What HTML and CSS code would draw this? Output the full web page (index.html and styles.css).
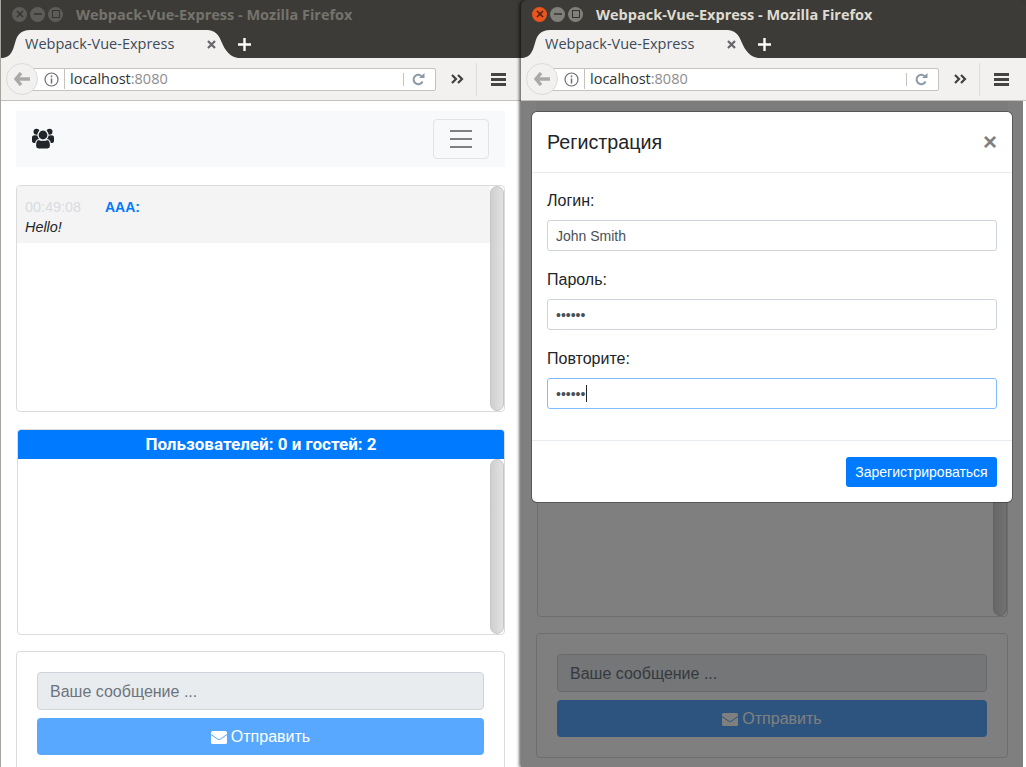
FILE: index.html
```html
<!DOCTYPE html>
<html lang="en">
<head>
    <meta charset="UTF-8">
    <meta name="viewport" content="width=device-width, initial-scale=1.0">
    <title>Webpack-Vue-Express</title>
    <link rel="stylesheet" href="styles.css">
</head>
<body>
    <div class="desktop">
        <!-- left window: unfocused -->
        <div class="window window-left">
            <div class="titlebar">
                <div class="win-buttons">
                    <span class="win-btn"><svg width="10" height="10" viewBox="0 0 10 10"><path d="M2 2l6 6M8 2l-6 6" stroke="#35342f" stroke-width="1.5"/></svg></span>
                    <span class="win-btn"><svg width="10" height="10" viewBox="0 0 10 10"><path d="M1 5h8" stroke="#35342f" stroke-width="1.5"/></svg></span>
                    <span class="win-btn"><svg width="10" height="10" viewBox="0 0 10 10"><rect x="1.5" y="1.5" width="7" height="7" fill="none" stroke="#35342f"/></svg></span>
                </div>
                <div class="win-title">Webpack-Vue-Express - Mozilla Firefox</div>
            </div>
            <div class="tabstrip">
                <div class="tab">
                    <svg class="tab-shape" width="235" height="28" viewBox="0 0 235 28"><path d="M0 28C8 27 10 20 12 13C14 5 18 0 27 0H204C212 0 216 5 219 13C222 20 227 27 235 28Z" fill="#f2f1f0"/></svg>
                    <span class="tab-label">Webpack-Vue-Express</span>
                    <svg class="tab-close" width="9" height="9" viewBox="0 0 9 9"><path d="M1 1l7 7M8 1l-7 7" stroke="#67666a" stroke-width="2.2"/></svg>
                </div>
                <svg class="tab-new" width="13" height="13" viewBox="0 0 13 13"><path d="M6.5 0v13M0 6.5h13" stroke="#fff" stroke-width="2.4"/></svg>
            </div>
            <div class="toolbar">
                <div class="back-btn"><svg width="16" height="14" viewBox="0 0 16 14"><path d="M7 1L2 7l5 6M2.5 7H16" fill="none" stroke="#a9a9a7" stroke-width="3.4"/></svg></div>
                <div class="urlbar">
                    <svg class="info-icon" width="15" height="15" viewBox="0 0 15 15"><circle cx="7.5" cy="7.5" r="6.5" fill="none" stroke="#6f6f6f" stroke-width="1.2"/><path d="M7.5 6.5v5M7.5 3.5v1.8" stroke="#6f6f6f" stroke-width="1.5"/></svg>
                    <span class="url"><span class="url-host">localhost</span>:8080</span>
                    <svg class="reload-icon" width="13" height="13" viewBox="0 0 13 13"><path d="M10.5 8.5A4.7 4.7 0 1 1 9.5 3" fill="none" stroke="#8c9aa6" stroke-width="2"/><path d="M7 5h5.5V0z" fill="#8c9aa6"/></svg>
                </div>
                <svg class="more-icon" width="13" height="10" viewBox="0 0 13 10"><path d="M1 1l4 4-4 4M7 1l4 4-4 4" fill="none" stroke="#404040" stroke-width="2.2"/></svg>
                <div class="menu-btn"><span></span><span></span><span></span></div>
            </div>
            <div class="viewport">
                <div class="page">
                    <nav class="navbar">
                        <svg width="22" height="22" viewBox="0 0 22 22">
                            <circle cx="4.5" cy="3.8" r="3"/>
                            <circle cx="17.5" cy="3.8" r="3"/>
                            <path d="M0 9.5C0 7.5 2 7 4 7.5H18C20 7 22 7.5 22 9.5V13C22 15 20 15 19 15H3C2 15 0 15 0 13Z"/>
                            <path d="M3.5 18C3.5 13 5.5 11.5 7 11.5C8.5 12.5 13.5 12.5 15 11.5C16.5 11.5 18.5 13 18.5 18C18.5 20 17 21 15.5 21H6.5C5 21 3.5 20 3.5 18Z" stroke="#f8f9fa" stroke-width="1.2"/>
                            <circle cx="11" cy="7" r="5" stroke="#f8f9fa" stroke-width="1.2"/>
                        </svg>
                        <div class="toggler">
                            <svg width="30" height="30" viewBox="0 0 30 30"><path d="M4 7h22M4 15h22M4 23h22" stroke="#808080" stroke-width="2"/></svg>
                        </div>
                    </nav>
                    <div class="box chat-box">
                        <div class="messages">
                            <div class="message">
                                <div class="message-head"><span class="message-time">00:49:08</span><span class="message-author">AAA:</span></div>
                                <div class="message-text">Hello!</div>
                            </div>
                        </div>
                        <div class="scrollbar"></div>
                    </div>
                    <div class="box users-box">
                        <div class="users-head">Пользователей: 0 и гостей: 2</div>
                        <div class="users-body"><div class="scrollbar"></div></div>
                    </div>
                    <div class="box send-box">
                        <input class="send-input" type="text" placeholder="Ваше сообщение ..." disabled>
                        <button class="send-btn" type="button">
                            <svg width="16" height="13" viewBox="0 0 16 13"><rect width="16" height="13" rx="1.5" fill="#fff"/><path d="M0 3.5L6.5 8Q8 9 9.5 8L16 3.5" fill="none" stroke="#58a8ff"/></svg>
                            Отправить
                        </button>
                    </div>
                </div>
            </div>
        </div>

        <!-- right window: focused, modal open -->
        <div class="window window-right">
            <div class="titlebar">
                <div class="win-buttons">
                    <span class="win-btn win-btn-close"><svg width="10" height="10" viewBox="0 0 10 10"><path d="M2 2l6 6M8 2l-6 6" stroke="#4a2010" stroke-width="1.5"/></svg></span>
                    <span class="win-btn"><svg width="10" height="10" viewBox="0 0 10 10"><path d="M1 5h8" stroke="#35342f" stroke-width="1.5"/></svg></span>
                    <span class="win-btn"><svg width="10" height="10" viewBox="0 0 10 10"><rect x="1.5" y="1.5" width="7" height="7" fill="none" stroke="#35342f"/></svg></span>
                </div>
                <div class="win-title">Webpack-Vue-Express - Mozilla Firefox</div>
            </div>
            <div class="tabstrip">
                <div class="tab">
                    <svg class="tab-shape" width="235" height="28" viewBox="0 0 235 28"><path d="M0 28C8 27 10 20 12 13C14 5 18 0 27 0H204C212 0 216 5 219 13C222 20 227 27 235 28Z" fill="#f2f1f0"/></svg>
                    <span class="tab-label">Webpack-Vue-Express</span>
                    <svg class="tab-close" width="9" height="9" viewBox="0 0 9 9"><path d="M1 1l7 7M8 1l-7 7" stroke="#67666a" stroke-width="2.2"/></svg>
                </div>
                <svg class="tab-new" width="13" height="13" viewBox="0 0 13 13"><path d="M6.5 0v13M0 6.5h13" stroke="#fff" stroke-width="2.4"/></svg>
            </div>
            <div class="toolbar">
                <div class="back-btn"><svg width="16" height="14" viewBox="0 0 16 14"><path d="M7 1L2 7l5 6M2.5 7H16" fill="none" stroke="#a9a9a7" stroke-width="3.4"/></svg></div>
                <div class="urlbar">
                    <svg class="info-icon" width="15" height="15" viewBox="0 0 15 15"><circle cx="7.5" cy="7.5" r="6.5" fill="none" stroke="#6f6f6f" stroke-width="1.2"/><path d="M7.5 6.5v5M7.5 3.5v1.8" stroke="#6f6f6f" stroke-width="1.5"/></svg>
                    <span class="url"><span class="url-host">localhost</span>:8080</span>
                    <svg class="reload-icon" width="13" height="13" viewBox="0 0 13 13"><path d="M10.5 8.5A4.7 4.7 0 1 1 9.5 3" fill="none" stroke="#8c9aa6" stroke-width="2"/><path d="M7 5h5.5V0z" fill="#8c9aa6"/></svg>
                </div>
                <svg class="more-icon" width="13" height="10" viewBox="0 0 13 10"><path d="M1 1l4 4-4 4M7 1l4 4-4 4" fill="none" stroke="#404040" stroke-width="2.2"/></svg>
                <div class="menu-btn"><span></span><span></span><span></span></div>
            </div>
            <div class="viewport">
                <div class="page">
                    <nav class="navbar"></nav>
                    <div class="box chat-box"><div class="messages"></div><div class="scrollbar"></div></div>
                    <div class="box users-box">
                        <div class="users-head">Пользователей: 0 и гостей: 2</div>
                        <div class="users-body"><div class="scrollbar"></div></div>
                    </div>
                    <div class="box send-box">
                        <input class="send-input" type="text" placeholder="Ваше сообщение ..." disabled>
                        <button class="send-btn" type="button">
                            <svg width="16" height="13" viewBox="0 0 16 13"><rect width="16" height="13" rx="1.5" fill="#fff"/><path d="M0 3.5L6.5 8Q8 9 9.5 8L16 3.5" fill="none" stroke="#58a8ff"/></svg>
                            Отправить
                        </button>
                    </div>
                </div>
                <div class="backdrop"></div>
                <div class="modal">
                    <div class="modal-header">
                        <div class="modal-title">Регистрация</div>
                        <div class="modal-close">×</div>
                    </div>
                    <div class="modal-body">
                        <label class="field-label">Логин:</label>
                        <input class="field" type="text" value="John Smith">
                        <label class="field-label">Пароль:</label>
                        <input class="field" type="password" value="123456">
                        <label class="field-label">Повторите:</label>
                        <div class="field-wrap">
                            <input class="field field-focus" type="password" value="123456">
                            <span class="caret"></span>
                        </div>
                    </div>
                    <div class="modal-footer">
                        <button class="register-btn" type="button">Зарегистрироваться</button>
                    </div>
                </div>
            </div>
        </div>
    </div>
</body>
</html>
```

FILE: styles.css
```css
* {
    box-sizing: border-box;
}

body {
    margin: 0;
    overflow: hidden;
    font-family: "Liberation Sans", Arial, sans-serif;
    background: #3c3b37;
}

.desktop {
    position: relative;
    width: 1026px;
    height: 767px;
    overflow: hidden;
}

/* windows sit on a free desktop */
.window {
    position: absolute;
    top: 0;
    height: 767px;
    display: flex;
    flex-direction: column;
    background: #3c3b37;
}

.window-left {
    left: 0;
    width: 521px;
    border-left: 1px solid #a5a49f;
}

.window-right {
    left: 521px;
    width: 505px;
    border-radius: 6px 6px 0 0;
    box-shadow: -2px 0 3px rgba(0, 0, 0, 0.55);
    z-index: 1;
    overflow: hidden;
}

/* title bar */
.titlebar {
    display: flex;
    align-items: center;
    height: 28px;
    flex-shrink: 0;
    padding-left: 11px;
}

.win-buttons {
    display: flex;
    gap: 3px;
}

.win-btn {
    display: flex;
    align-items: center;
    justify-content: center;
    width: 15px;
    height: 15px;
    border-radius: 50%;
    background: #5d5c58;
}

.window-right .win-btn {
    background: #807f7a;
}

.window-right .win-btn-close {
    background: #e9541f;
}

.win-title {
    margin-left: 13px;
    font-family: "Open Sans", sans-serif;
    font-size: 14.5px;
    font-weight: 700;
    color: #75736d;
}

.window-right .win-title {
    color: #dfdbd2;
}

/* tabs */
.tabstrip {
    display: flex;
    align-items: center;
    height: 30px;
    flex-shrink: 0;
    padding: 2px 0 0 2px;
}

.tab {
    position: relative;
    display: flex;
    align-items: center;
    justify-content: space-between;
    width: 235px;
    height: 28px;
    padding: 0 22px;
}

.tab-shape {
    position: absolute;
    top: 0;
    left: 0;
}

.tab-label {
    position: relative;
    font-family: "Open Sans", sans-serif;
    font-size: 14.5px;
    line-height: 26px;
    color: #3d4a57;
}

.tab-close {
    position: relative;
}

/* toolbar */
.toolbar {
    display: flex;
    align-items: center;
    height: 43px;
    flex-shrink: 0;
    padding: 0 15px 0 5px;
    background: #f2f1f0;
    border-bottom: 1px solid #c2c1be;
}

.window-right .toolbar {
    padding-right: 17px;
}

.back-btn {
    position: relative;
    z-index: 1;
    display: flex;
    align-items: center;
    justify-content: center;
    width: 32px;
    height: 32px;
    margin-right: -8px;
    flex-shrink: 0;
    border: 1px solid #dcdbd9;
    border-radius: 50%;
    background: #f2f1f0;
}

.urlbar {
    display: flex;
    align-items: center;
    flex: 1;
    height: 23px;
    padding-left: 13px;
    background: #fff;
    border: 1px solid #c4c3c0;
    border-radius: 2px;
}

.info-icon {
    flex-shrink: 0;
}

.url {
    flex: 1;
    margin-left: 5px;
    padding-left: 5px;
    border-left: 1px solid #c4c3c0;
    font-family: "Open Sans", sans-serif;
    font-size: 14.5px;
    line-height: 20px;
    color: #8e8e8e;
}

.url-host {
    color: #2e3436;
}

.reload-icon {
    box-sizing: content-box;
    padding: 0 10px 0 8px;
    border-left: 1px solid #c4c3c0;
}

.more-icon {
    margin: 0 12px 0 15px;
    flex-shrink: 0;
}

.menu-btn {
    display: flex;
    flex-direction: column;
    justify-content: center;
    gap: 2px;
    width: 30px;
    height: 33px;
    padding-left: 14px;
    border-left: 1px solid #dddcda;
    flex-shrink: 0;
}

.menu-btn span {
    display: block;
    height: 3px;
    background: #444;
}

/* page in the browser */
.viewport {
    position: relative;
    flex: 1;
    overflow: hidden;
    background: #fff;
}

.window-right .viewport {
    border-right: 3px solid #fff;
}

.page {
    width: 520px;
    padding: 10px 16px 0 15px;
}

.window-right .page {
    width: 503px;
    margin-top: -18px;
}

.navbar {
    display: flex;
    align-items: center;
    justify-content: space-between;
    height: 56px;
    padding: 0 16px;
    background: #f8f9fa;
}

.navbar > svg {
    fill: #212529;
}

.toggler {
    display: flex;
    align-items: center;
    justify-content: center;
    width: 56px;
    height: 40px;
    border: 1px solid #e2e3e4;
    border-radius: 4px;
}

.box {
    border: 1px solid #dcdcdc;
    border-radius: 4px;
}

.chat-box {
    display: flex;
    height: 227px;
    margin-top: 18px;
    overflow: hidden;
}

.messages {
    flex: 1;
}

.scrollbar {
    width: 14px;
    flex-shrink: 0;
    border-radius: 7px;
    border: 1px solid #c6c6c6;
    background: linear-gradient(to right, #cfcfcf, #e2e2e2);
}

.message {
    height: 57px;
    padding: 11px 8px 0;
    background: #f4f4f4;
    font-size: 14.4px;
    line-height: 20px;
}

.message-time {
    display: inline-block;
    width: 80px;
    color: #d8dbe0;
}

.message-author {
    font-size: 14px;
    font-weight: 700;
    color: #007bff;
}

.message-text {
    font-style: italic;
    color: #212529;
}

.users-box {
    display: flex;
    flex-direction: column;
    height: 206px;
    margin: 17px 0 0 1px;
    overflow: hidden;
}

.users-head {
    height: 29px;
    flex-shrink: 0;
    background: #007bff;
    color: #fff;
    font-family: Roboto, sans-serif;
    font-size: 17px;
    font-weight: 700;
    line-height: 29px;
    text-align: center;
}

.users-body {
    display: flex;
    justify-content: flex-end;
    flex: 1;
}

.send-box {
    display: flex;
    flex-direction: column;
    gap: 8px;
    height: 125px;
    margin-top: 16px;
    padding: 20px;
}

.send-input {
    width: 100%;
    height: 38px;
    padding: 2px 12px 0;
    background: #e9ecef;
    border: 1px solid #ced4da;
    border-radius: 4px;
    font-family: inherit;
    font-size: 16px;
}

.send-input::placeholder {
    color: #6c757d;
    opacity: 1;
}

.send-btn {
    display: flex;
    align-items: center;
    justify-content: center;
    gap: 4px;
    width: 100%;
    height: 38px;
    padding-top: 3px;
    background: #58a8ff;
    border: 0;
    border-radius: 4px;
    color: #fff;
    font-family: inherit;
    font-size: 16px;
}

/* modal */
.backdrop {
    position: absolute;
    top: 0;
    left: 0;
    right: 0;
    bottom: 0;
    background: rgba(0, 0, 0, 0.5);
}

.window-right .backdrop {
    right: -3px;
}

.modal {
    position: absolute;
    top: 11px;
    left: 11px;
    width: 480px;
    background: #fff;
    border-radius: 5px;
    box-shadow: 0 0 0 1px rgba(0, 0, 0, 0.3);
}

.modal-header {
    display: flex;
    align-items: center;
    justify-content: space-between;
    height: 61px;
    padding: 0 15px;
    border-bottom: 1px solid #e9ecef;
}

.modal-title {
    font-size: 19.7px;
    color: #212529;
}

.modal-close {
    font-size: 24px;
    font-weight: 700;
    color: #7f7f7f;
}

.modal-body {
    display: flex;
    flex-direction: column;
    height: 267px;
    padding: 16px 15px 0;
}

.field-label {
    height: 31px;
    font-size: 16px;
    line-height: 24px;
    color: #212529;
}

.field {
    width: 100%;
    height: 31px;
    margin-bottom: 17px;
    padding: 0 8px;
    border: 1px solid #ced4da;
    border-radius: 3px;
    font-family: inherit;
    font-size: 14px;
    color: #495057;
}

.field-focus {
    margin-bottom: 0;
    border-color: #80bdff;
}

.field-wrap {
    position: relative;
}

.caret {
    position: absolute;
    top: 7px;
    left: 39px;
    width: 1px;
    height: 17px;
    background: #222;
}

.modal-footer {
    display: flex;
    justify-content: flex-end;
    height: 62px;
    padding: 16px 15px;
    border-top: 1px solid #e9ecef;
}

.register-btn {
    width: 151px;
    height: 30px;
    background: #007bff;
    border: 0;
    border-radius: 3px;
    color: #fff;
    font-family: inherit;
    font-size: 14px;
}
```
